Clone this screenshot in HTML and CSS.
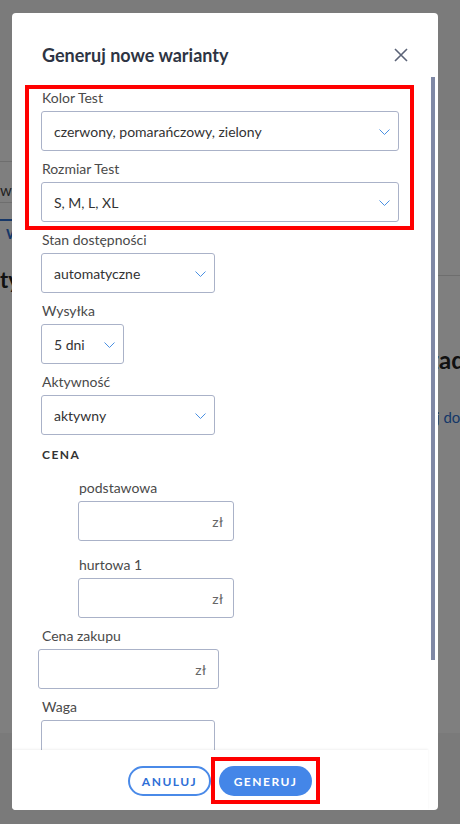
FILE: index.html
```html
<!DOCTYPE html>
<html lang="pl">
<head>
<meta charset="utf-8">
<title>Generuj nowe warianty</title>
<link rel="stylesheet" href="styles.css">
</head>
<body>
<div class="page">
  <div class="page-top"></div>
  <div class="page-main">
    <div class="page-left">
      <div class="preview-row">wi</div>
      <div class="tabs"><span class="tab">W</span></div>
      <div class="page-h">ty</div>
    </div>
    <div class="page-right">
      <div class="right-line"></div>
      <div class="right-h">żad</div>
      <div class="right-text">ej <span class="link">do</span></div>
    </div>
  </div>
  <div class="page-bottom"></div>
</div>
<div class="overlay"></div>

<div class="modal">
  <div class="modal-head">
    <h1 class="modal-title">Generuj nowe warianty</h1>
    <button class="close" type="button" aria-label="Zamknij">
      <svg width="14" height="14" viewBox="0 0 14 14"><path d="M1 1 L13 13 M13 1 L1 13" fill="none" stroke="#5b6377" stroke-width="1.6"/></svg>
    </button>
  </div>
  <div class="modal-body">
    <div class="body-content">
      <div class="field">
        <div class="label">Kolor Test</div>
        <div class="select w-full"><span>czerwony, pomarańczowy, zielony</span><svg class="chev" width="11" height="6" viewBox="0 0 11 6"><path d="M0.5 0.5 L5.5 5.5 L10.5 0.5" fill="none" stroke="#4a90e2" stroke-width="1"/></svg></div>
      </div>
      <div class="field">
        <div class="label">Rozmiar Test</div>
        <div class="select w-full"><span>S, M, L, XL</span><svg class="chev" width="11" height="6" viewBox="0 0 11 6"><path d="M0.5 0.5 L5.5 5.5 L10.5 0.5" fill="none" stroke="#4a90e2" stroke-width="1"/></svg></div>
      </div>
      <div class="field">
        <div class="label">Stan dostępności</div>
        <div class="select w-md"><span>automatyczne</span><svg class="chev" width="11" height="6" viewBox="0 0 11 6"><path d="M0.5 0.5 L5.5 5.5 L10.5 0.5" fill="none" stroke="#4a90e2" stroke-width="1"/></svg></div>
      </div>
      <div class="field">
        <div class="label">Wysyłka</div>
        <div class="select w-sm"><span>5 dni</span><svg class="chev" width="11" height="6" viewBox="0 0 11 6"><path d="M0.5 0.5 L5.5 5.5 L10.5 0.5" fill="none" stroke="#4a90e2" stroke-width="1"/></svg></div>
      </div>
      <div class="field">
        <div class="label">Aktywność</div>
        <div class="select w-md"><span>aktywny</span><svg class="chev" width="11" height="6" viewBox="0 0 11 6"><path d="M0.5 0.5 L5.5 5.5 L10.5 0.5" fill="none" stroke="#4a90e2" stroke-width="1"/></svg></div>
      </div>
      <div class="section-h">CENA</div>
      <div class="price-group">
        <div class="field sub">
          <div class="label">podstawowa</div>
          <div class="input w-price"><span class="unit">zł</span></div>
        </div>
        <div class="field sub">
          <div class="label">hurtowa 1</div>
          <div class="input w-price"><span class="unit">zł</span></div>
        </div>
      </div>
      <div class="field">
        <div class="label">Cena zakupu</div>
        <div class="input w-buy"><span class="unit">zł</span></div>
      </div>
      <div class="field">
        <div class="label">Waga</div>
        <div class="input w-md"></div>
      </div>
    </div>
    <div class="scrollbar"><div class="thumb"></div></div>
  </div>
  <div class="modal-foot">
    <button class="btn btn-outline" type="button">ANULUJ</button>
    <button class="btn btn-primary" type="button">GENERUJ</button>
  </div>
</div>

<div class="mark mark-fields"></div>
<div class="mark mark-button"></div>
</body>
</html>
```

FILE: styles.css
```css
* { box-sizing: border-box; }
html, body { margin: 0; padding: 0; }
body {
  width: 460px;
  height: 824px;
  overflow: hidden;
  position: relative;
  font-family: Lato, "Noto Sans", sans-serif;
  background: #fff;
  color: #333;
}

/* background page */
.page { height: 824px; display: flex; flex-direction: column; }
.page-top { height: 130px; background: #f6f6f6; flex: none; }
.page-main { flex: 1; display: flex; justify-content: space-between; }
.page-left { width: 40px; overflow: hidden; padding-top: 31px; }
.preview-row {
  height: 42px;
  border-top: 1px solid #dcdcdc;
  border-bottom: 1px solid #dcdcdc;
  font-size: 15px;
  line-height: 16px;
  padding-top: 20px;
  color: #444;
}
.tabs { margin-top: 16px; border-top: 2px solid #2c6fd1; height: 30px; }
.tab { display: block; color: #2c6fd1; font-size: 14px; font-weight: 700; line-height: 26px; padding-left: 6px; }
.page-h { margin-top: 18px; font-size: 22px; font-weight: 700; color: #222; line-height: 26px; }
.page-right { width: 32px; overflow: hidden; padding-top: 145px; }
.right-line { height: 1px; background: #dcdcdc; }
.right-h { margin-top: 70px; font-size: 24px; font-weight: 700; color: #222; line-height: 28px; white-space: nowrap; }
.right-text { margin-top: 34px; font-size: 15px; color: #444; line-height: 18px; white-space: nowrap; }
.right-text .link { color: #2c6fd1; }
.page-bottom { height: 91px; background: #f4f4f4; flex: none; }
.overlay { position: absolute; inset: 0; background: rgba(0, 0, 0, 0.5); }

/* modal */
.modal {
  position: absolute;
  left: 12px;
  top: 13px;
  width: 426px;
  height: 797px;
  background: #fff;
  border-radius: 4px;
  display: flex;
  flex-direction: column;
  overflow: hidden;
}
.modal-head {
  flex: none;
  height: 64px;
  padding: 30px 30px 10px 30px;
  display: flex;
  align-items: center;
  justify-content: space-between;
}
.modal-title {
  margin: 0;
  font-size: 18px;
  line-height: 24px;
  font-weight: 700;
  color: #2e3443;
}
.close {
  border: 0;
  background: none;
  padding: 0;
  width: 14px;
  height: 14px;
  display: flex;
}
.modal-body { flex: 1; min-height: 0; display: flex; }
.body-content { flex: 1; overflow: hidden; padding: 11px 0 0 29px; }
.scrollbar { width: 4px; margin-right: 3px; flex: none; }
.thumb { height: 583px; background: #7f88a5; }

.field { margin-bottom: 8px; }
.label {
  font-size: 14px;
  line-height: 20px;
  color: #4a4a4a;
  margin-bottom: 3px;
  padding-left: 1px;
}
.select, .input {
  height: 40px;
  border: 1px solid #aab2c8;
  border-radius: 3px;
  display: flex;
  align-items: center;
  font-size: 14px;
  color: #333;
}
.select { justify-content: space-between; padding: 0 8px 0 12px; }
.chev { flex: none; margin-top: 1px; }
.input { justify-content: flex-end; padding: 0 10px; }
.unit { color: #666; font-size: 14px; }
.w-full { width: 358px; }
.w-md { width: 174px; }
.w-sm { width: 83px; }
.w-price { width: 156px; }
.w-buy { width: 181px; margin-left: -3px; padding-right: 12px; }

.section-h {
  margin-top: 12px;
  font-size: 12px;
  line-height: 16px;
  font-weight: 700;
  letter-spacing: 1.5px;
  color: #333;
  padding-left: 1px;
}
.price-group { padding-left: 37px; padding-top: 15px; }
.field.sub { margin-bottom: 14px; }
.field.sub:last-child { margin-bottom: 8px; }

.modal-foot {
  flex: none;
  height: 60px;
  margin-right: 10px;
  padding-top: 16px;
  display: flex;
  justify-content: center;
  align-items: flex-start;
  gap: 8px;
  box-shadow: 0 -1px 2px rgba(0, 0, 0, 0.06);
  position: relative;
  background: #fff;
}
.btn {
  height: 30px;
  border-radius: 15px;
  font-family: Lato, "Noto Sans", sans-serif;
  font-size: 12px;
  font-weight: 700;
  letter-spacing: 1.5px;
  padding: 0;
  cursor: pointer;
}
.btn-outline { width: 83px; border: 2px solid #4a8ae8; background: #fff; color: #2f6fd6; }
.btn-primary { width: 93px; border: 0; background: #4486e8; color: #fff; }

/* annotation marks */
.mark { position: absolute; border: 4px solid #ff0000; }
.mark-fields { left: 25px; top: 85px; width: 389px; height: 145px; }
.mark-button { left: 211px; top: 757px; width: 109px; height: 47px; }
```
